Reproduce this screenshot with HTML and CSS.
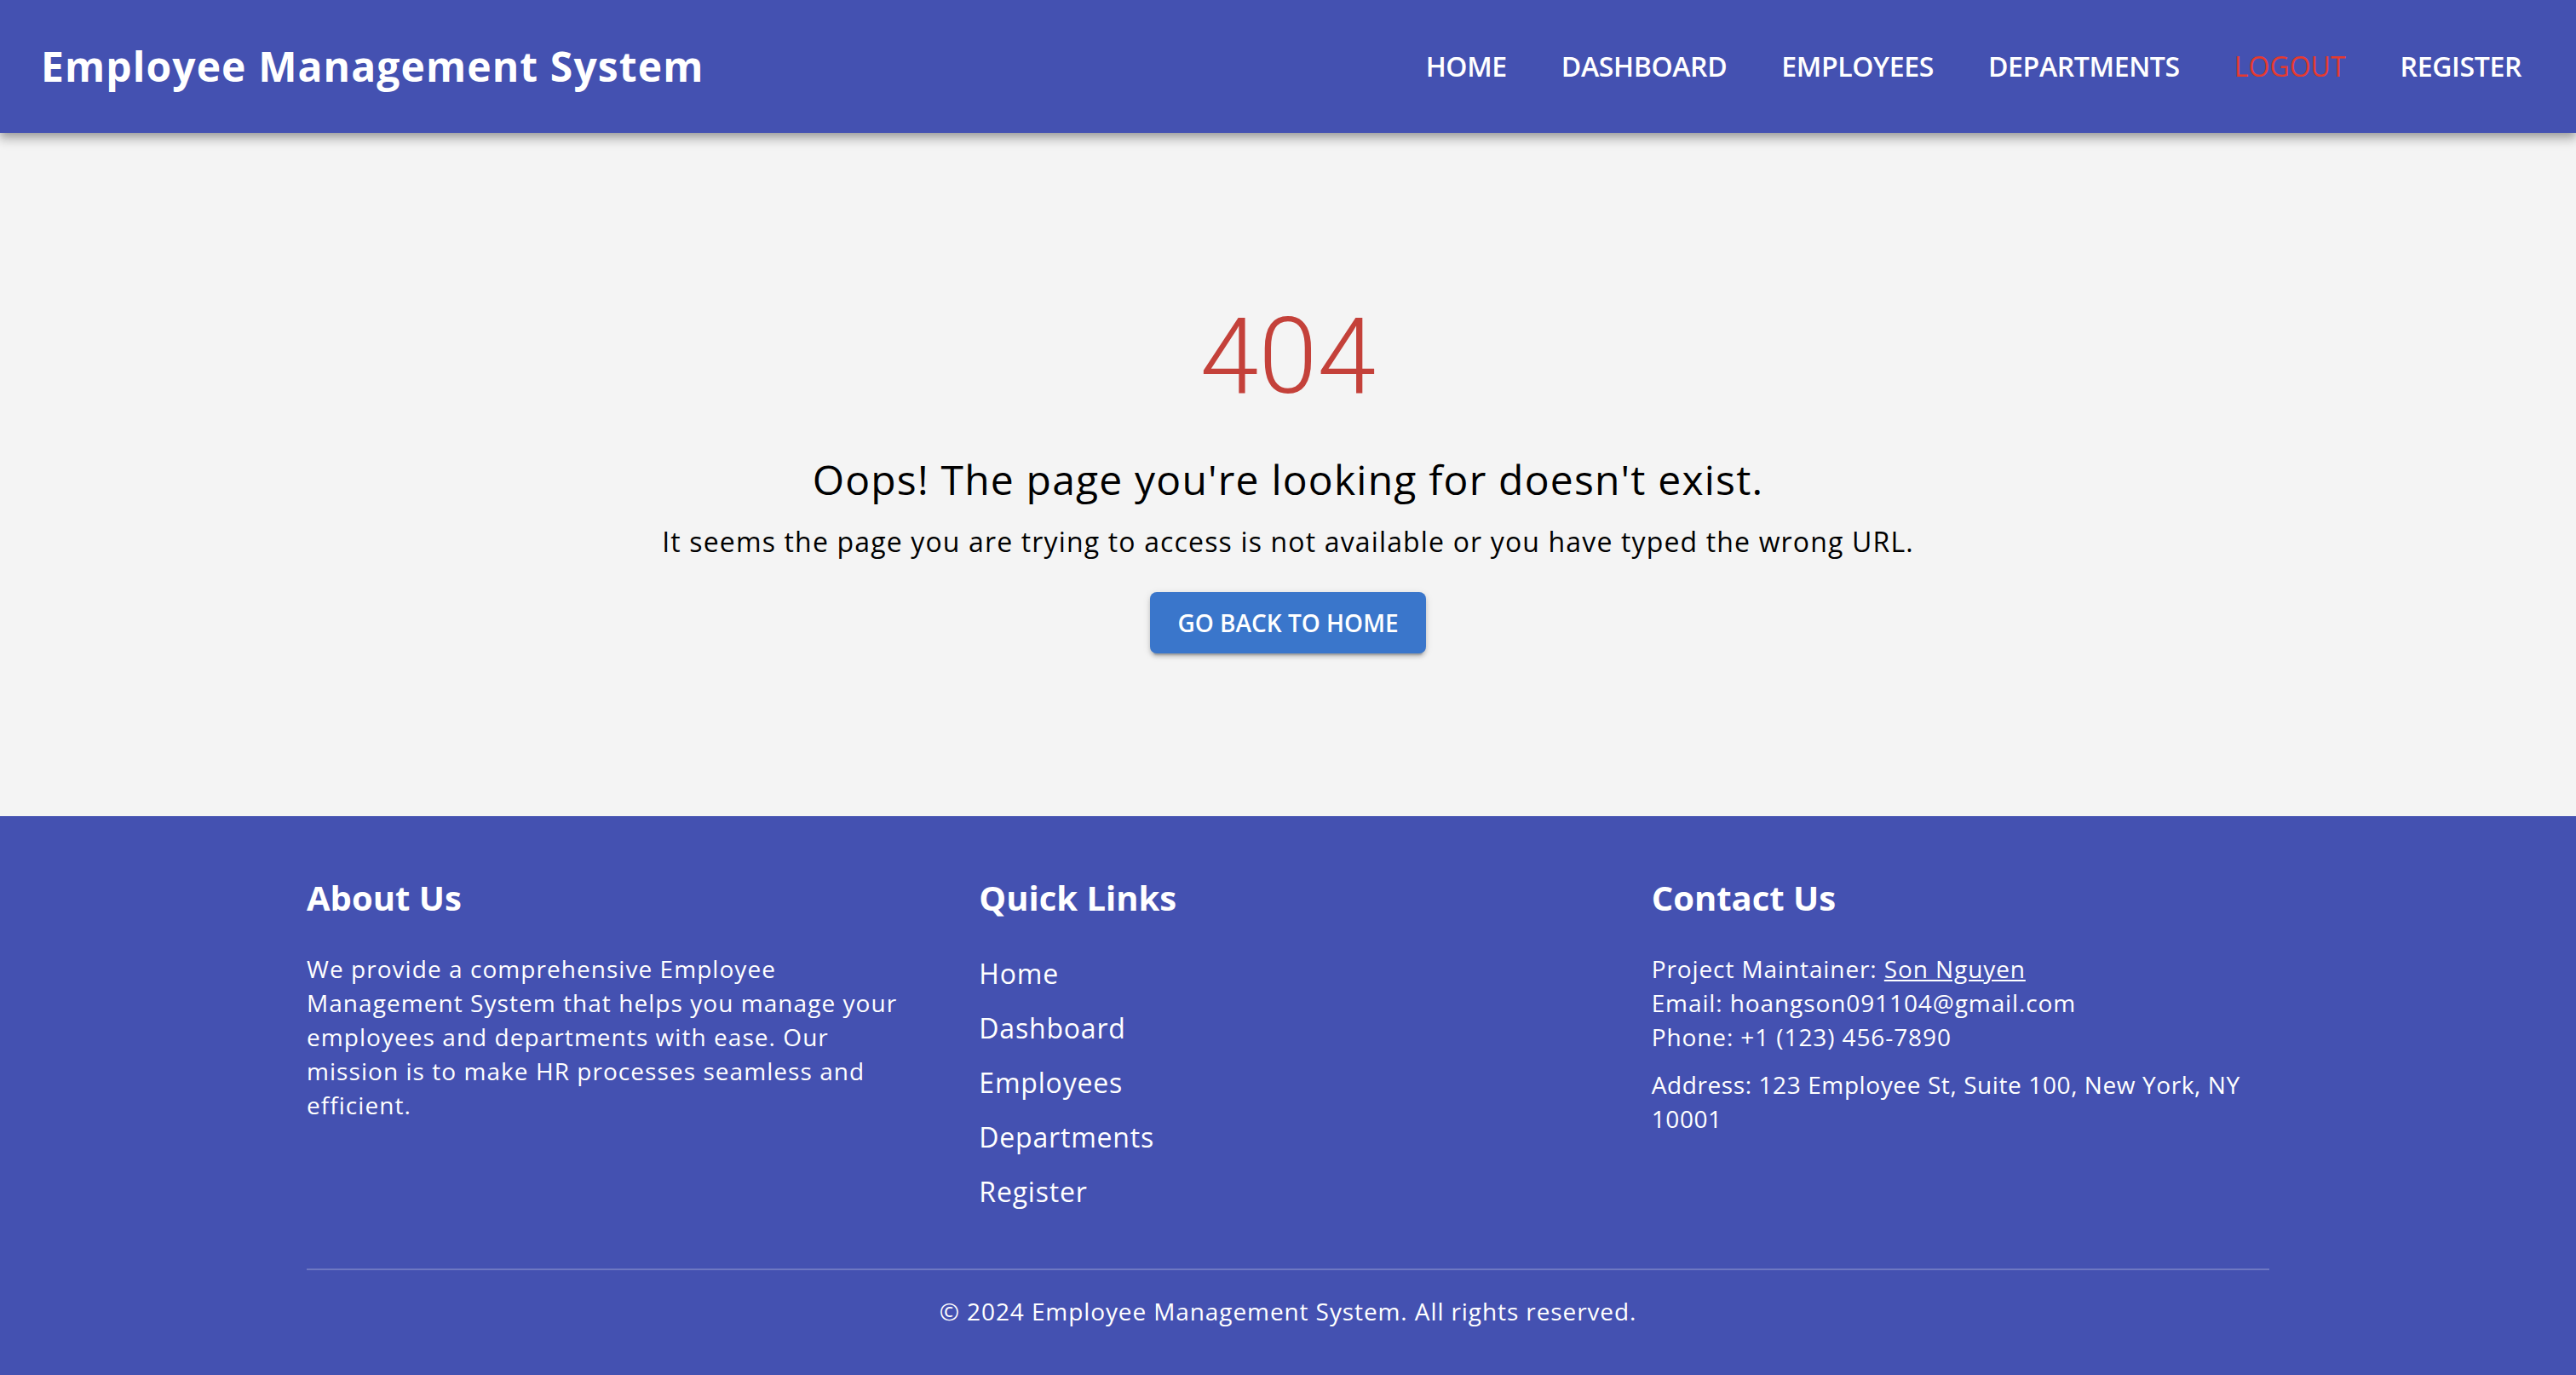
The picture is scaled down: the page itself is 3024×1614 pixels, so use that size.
FILE: index.html
```html
<!DOCTYPE html>
<html lang="en">
<head>
<meta charset="utf-8">
<title>Employee Management System</title>
<link rel="stylesheet" href="styles.css">
</head>
<body>
<header class="appbar">
  <div class="brand">Employee Management System</div>
  <nav class="nav">
    <a class="nav-item" href="#">Home</a>
    <a class="nav-item" href="#">Dashboard</a>
    <a class="nav-item" href="#">Employees</a>
    <a class="nav-item" href="#">Departments</a>
    <a class="nav-item nav-logout" href="#">Logout</a>
    <a class="nav-item" href="#">Register</a>
  </nav>
</header>

<main class="notfound">
  <div class="code">404</div>
  <h2 class="title">Oops! The page you're looking for doesn't exist.</h2>
  <p class="subtitle">It seems the page you are trying to access is not available or you have typed the wrong URL.</p>
  <a class="btn" href="#">Go Back to Home</a>
</main>

<footer class="footer">
  <div class="container">
    <div class="cols">
      <section class="col">
        <h6 class="col-title">About Us</h6>
        <p class="text about">We provide a comprehensive Employee Management System that helps you manage your employees and departments with ease. Our mission is to make HR processes seamless and efficient.</p>
      </section>
      <section class="col">
        <h6 class="col-title">Quick Links</h6>
        <ul class="links">
          <li><a href="#">Home</a></li>
          <li><a href="#">Dashboard</a></li>
          <li><a href="#">Employees</a></li>
          <li><a href="#">Departments</a></li>
          <li><a href="#">Register</a></li>
        </ul>
      </section>
      <section class="col">
        <h6 class="col-title">Contact Us</h6>
        <p class="text">Project Maintainer: <a class="ulink" href="#">Son Nguyen</a><br>Email: hoangson091104@gmail.com<br>Phone: +1 (123) 456-7890</p>
        <p class="text address">Address: 123 Employee St, Suite 100, New York, NY 10001</p>
      </section>
    </div>
    <div class="divider"></div>
    <p class="copy">© 2024 Employee Management System. All rights reserved.</p>
  </div>
</footer>
</body>
</html>
```

FILE: styles.css
```css
* { box-sizing: border-box; }
html, body { margin: 0; padding: 0; }
body {
  font-family: "Open Sans", "DejaVu Sans", sans-serif;
  background: #f4f4f4;
  color: #000;
}
a { color: inherit; text-decoration: none; }

.appbar {
  position: relative;
  z-index: 2;
  height: 156px;
  background: #4451b1;
  color: #fff;
  display: flex;
  align-items: center;
  justify-content: space-between;
  padding: 0 48px;
  box-shadow: 0 4px 8px -2px rgba(0,0,0,0.2), 0 8px 10px 1px rgba(0,0,0,0.14), 0 2px 18px 2px rgba(0,0,0,0.12);
}
.brand {
  font-size: 48px;
  font-weight: 700;
  line-height: 1.6;
  letter-spacing: 1.1px;
}
.nav {
  display: flex;
  gap: 32px;
}
.nav-item {
  font-size: 32px;
  font-weight: 600;
  text-transform: uppercase;
  line-height: 1.75;
  padding: 12px 16px;
  color: #fff;
  letter-spacing: -0.35px;
}
.nav-logout { color: #e53a2f; font-weight: 500; letter-spacing: 0; }

.notfound {
  height: 802px;
  padding-top: 189px;
  display: flex;
  flex-direction: column;
  align-items: center;
  text-align: center;
}
.code {
  font-family: Roboto, "Open Sans", sans-serif;
  font-weight: 300;
  font-size: 124px;
  line-height: 1.2;
  color: #c4413a;
}
.title {
  margin: 37px 0 0;
  font-size: 48px;
  font-weight: 400;
  line-height: 64px;
  letter-spacing: 1.2px;
}
.subtitle {
  margin: 17px 0 0;
  font-size: 32px;
  line-height: 48px;
  letter-spacing: 1.15px;
}
.btn {
  margin-top: 35px;
  display: inline-block;
  background: #3a76cb;
  color: #fff;
  font-size: 28px;
  font-weight: 600;
  text-transform: uppercase;
  line-height: 48px;
  padding: 12px 32px;
  border-radius: 8px;
  box-shadow: 0 6px 2px -4px rgba(0,0,0,0.2), 0 4px 4px 0 rgba(0,0,0,0.14), 0 2px 10px 0 rgba(0,0,0,0.12);
}

.footer {
  background: #4451b1;
  color: #fff;
  height: 656px;
  padding-top: 64px;
}
.container {
  width: 2400px;
  margin: 0 auto;
  padding: 0 48px;
}
.cols {
  display: grid;
  grid-template-columns: repeat(3, 1fr);
  column-gap: 64px;
}
.col-title {
  margin: 0 0 31px;
  font-size: 40px;
  font-weight: 700;
  line-height: 64px;
}
.text {
  margin: 0;
  font-size: 28px;
  line-height: 40px;
  letter-spacing: 0.9px;
}
.about { letter-spacing: 1.05px; }
.address { margin-top: 16px; letter-spacing: 0.6px; }
.ulink { text-decoration: underline; }
.links {
  list-style: none;
  margin: 0;
  padding: 0;
  display: flex;
  flex-direction: column;
  gap: 12px;
}
.links a {
  display: block;
  font-size: 32px;
  line-height: 52px;
  letter-spacing: 0.8px;
}
.divider {
  margin-top: 64px;
  height: 2px;
  background: rgba(255,255,255,0.22);
}
.copy {
  margin: 28px 0 0;
  text-align: center;
  font-size: 28px;
  line-height: 40px;
  letter-spacing: 0.9px;
}
```
